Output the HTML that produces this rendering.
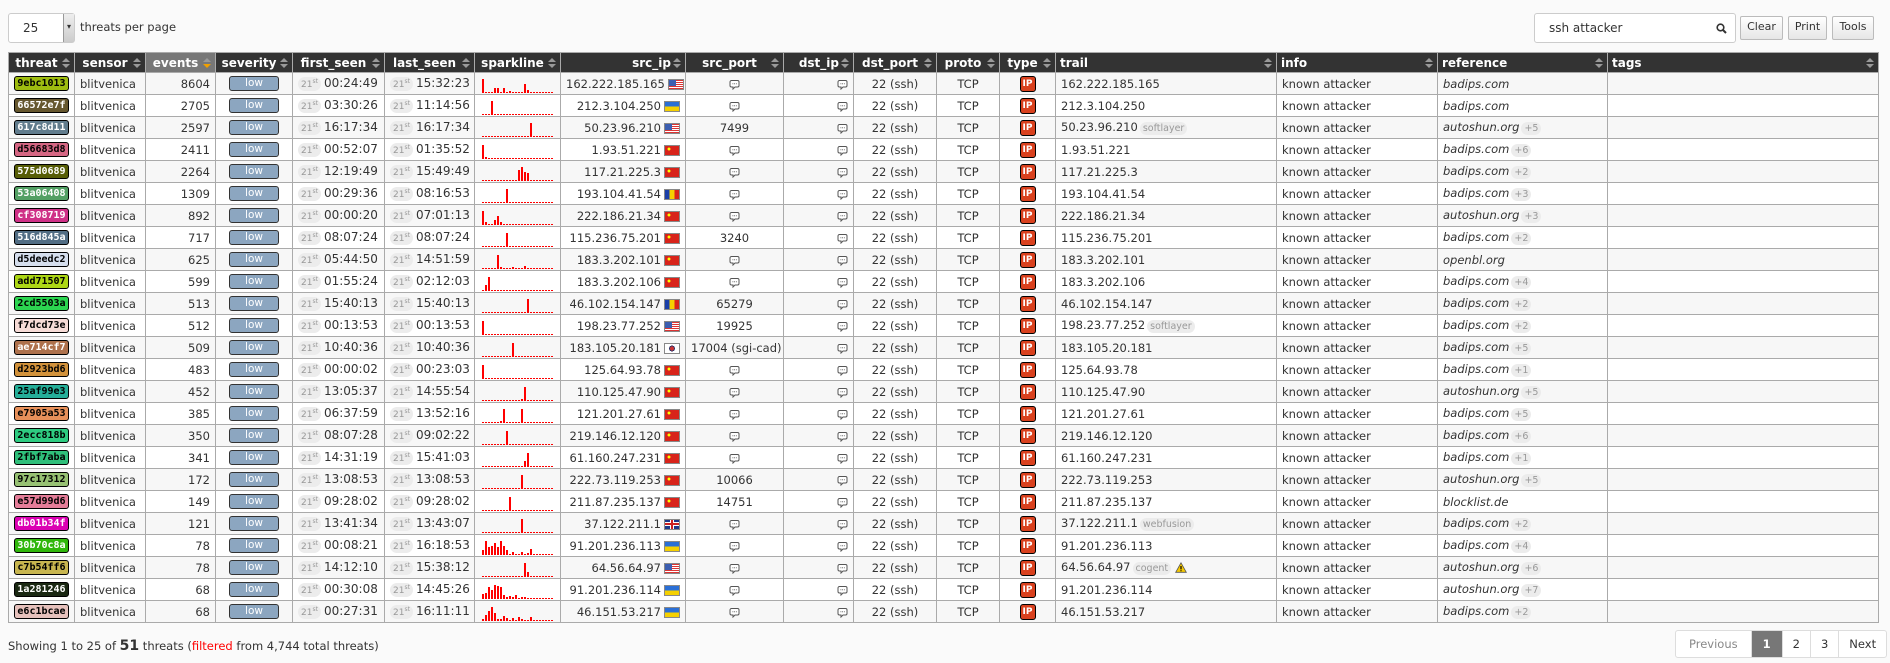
<!DOCTYPE html>
<html><head><meta charset="utf-8"><style>
*{box-sizing:border-box}
body{margin:0;background:#fafafa;font-family:"DejaVu Sans","Liberation Sans",sans-serif;font-size:11.5px;color:#333;width:1890px;height:663px;overflow:hidden;position:relative}
.sel{position:absolute;left:8px;top:13px;width:67px;height:30px;background:#fff;border:1px solid #ccc;border-radius:3px}
.sel span{position:absolute;left:14px;top:7px;font-size:12px}
.sel i{position:absolute;right:0;top:0;width:11px;height:28px;background:linear-gradient(#eee,#ccc);border-left:1px solid #999;font-style:normal;font-size:8px;text-align:center;line-height:26px}
.tpp{position:absolute;left:80px;top:20px;font-size:11.5px}
.search{position:absolute;left:1534px;top:13px;width:202px;height:30px;background:#fff;border:1px solid #ccc;border-radius:3px}
.search span{position:absolute;left:14px;top:7px;font-size:12px}
.btn{position:absolute;top:16px;height:24px;border:1px solid #bbb;background:linear-gradient(#fff,#e6e6e6);font-size:11px;text-align:center;line-height:20px;border-radius:2px}
table{position:absolute;left:8px;top:52px;border-collapse:collapse;table-layout:fixed;width:1870px}
th{background:#333;color:#fff;font-weight:bold;font-size:12px;height:20px;border:1px solid #aaa;padding:0 14px 0 4px;position:relative;white-space:nowrap}
th:after{content:"";position:absolute;right:4px;top:5px;width:0;height:0;border-left:4px solid transparent;border-right:4px solid transparent;border-bottom:4px solid #999}
th:before{content:"";position:absolute;right:4px;top:11px;width:0;height:0;border-left:4px solid transparent;border-right:4px solid transparent;border-top:4px solid #999}
th.ev{background:#777}th.ev:before{border-top-color:#f0a000}
td{height:22px;border:1px solid #aaa;padding:0 5px;white-space:nowrap;overflow:hidden}
tr:nth-child(even) td{background:#f7f7f7}
tr:nth-child(odd) td{background:#fff}
.c{text-align:center}.r{text-align:right}
.tb{display:inline-block;width:55px;height:15px;border:1px solid #000;border-radius:3px;font-weight:bold;font-size:10px;line-height:13px;text-align:center;font-family:"DejaVu Sans Mono","Liberation Mono",monospace;vertical-align:middle}
.w{color:#fff}.k{color:#000}
.low{display:inline-block;width:50px;height:15px;background:#8ca6c0;border:1px solid #333;border-radius:3px;color:#fff;font-size:10.5px;line-height:13px;text-align:center;vertical-align:middle}
.d{display:inline-block;background:#ececec;border-radius:7px;color:#999;font-size:9px;padding:1px 3px;margin-right:3px}
.d sup{font-size:6px}
.t{font-size:12px}
.f{display:inline-block;width:16px;height:11px;vertical-align:middle;margin-left:3px;border:1px solid #888}
.us{background:linear-gradient(#3c5eb0,#3c5eb0) 0 0/7px 6px no-repeat,repeating-linear-gradient(#d33 0 1px,#fff 1px 2px)}
.ua{background:linear-gradient(#2a6fd6 50%,#f5d000 50%)}
.cn{background:radial-gradient(circle at 4px 3px,#ff0 1.3px,transparent 1.6px),#d8231a}
.md{background:linear-gradient(90deg,#1a3fa8 33%,#f5d000 33% 67%,#d8231a 67%)}
.kr{background:radial-gradient(circle,#c33 0 2px,#336 2px 3px,#fff 3px)}
.gb{background:linear-gradient(#c22,#c22) center/16px 2px no-repeat,linear-gradient(#c22,#c22) center/2px 11px no-repeat,linear-gradient(#fff,#fff) center/16px 4px no-repeat,linear-gradient(#fff,#fff) center/4px 11px no-repeat,#1f3a8a}
.ip{display:inline-block;width:16px;height:16px;background:#d9411e;border:1px solid #000;border-radius:3px;color:#fff;font-weight:bold;font-size:9px;line-height:14px;text-align:center;vertical-align:middle}
.p{display:inline-block;background:#ececec;border-radius:7px;color:#999;font-size:9.5px;padding:1px 3px;margin-left:2px}
.ref{font-style:italic}
.cm{vertical-align:middle}
.sp{padding-left:7px}
.sp svg{display:block;margin-top:3px}
.foot{position:absolute;left:8px;top:638px;font-size:11.5px}
.foot b{font-size:14px}
.pg{position:absolute;left:1675px;top:630px;height:28px;border:1px solid #ddd;border-radius:3px;background:#fff;display:flex;font-size:11.5px}
.pg span{display:block;line-height:26px;padding:0 10px;border-left:1px solid #ddd}
</style></head><body>
<div class="sel"><span>25</span><i>▾</i></div>
<div class="tpp">threats per page</div>
<div class="search"><span>ssh attacker</span><svg style="position:absolute;right:8px;top:9px" width="11" height="11" viewBox="0 0 11 11"><circle cx="4.5" cy="4.5" r="3.3" fill="none" stroke="#333" stroke-width="1.6"/><path d="M7 7l3 3" stroke="#333" stroke-width="2"/></svg></div>
<div class="btn" style="left:1740px;width:43px">Clear</div>
<div class="btn" style="left:1788px;width:39px">Print</div>
<div class="btn" style="left:1832px;width:42px">Tools</div>
<svg width="0" height="0" style="position:absolute"><defs><symbol id="cm" viewBox="0 0 11 11"><path d="M2.5 1.5h6a1.5 1.5 0 0 1 1.5 1.5v3.5a1.5 1.5 0 0 1-1.5 1.5h-2.5l-2 2v-2h-1.5a1.5 1.5 0 0 1-1.5-1.5v-3.5a1.5 1.5 0 0 1 1.5-1.5z" fill="#fff" stroke="#555" stroke-width="1"/><path d="M3.5 4.8h.8M5.2 4.8h.8M6.9 4.8h.8" stroke="#555"/></symbol><symbol id="bl" viewBox="0 0 72 16"><line x1="0" y1="15.5" x2="72" y2="15.5" stroke="#f00" stroke-dasharray="2 1"/></symbol></defs></svg>
<table>
<colgroup><col style="width:66px"><col style="width:71px"><col style="width:70px"><col style="width:77px"><col style="width:92px"><col style="width:90px"><col style="width:86px"><col style="width:125px"><col style="width:98px"><col style="width:70px"><col style="width:83px"><col style="width:63px"><col style="width:56px"><col style="width:221px"><col style="width:161px"><col style="width:170px"><col style="width:271px"></colgroup>
<tr><th>threat</th><th>sensor</th><th class="ev">events</th><th>severity</th><th>first_seen</th><th>last_seen</th><th>sparkline</th><th style="text-align:right">src_ip</th><th>src_port</th><th style="text-align:right">dst_ip</th><th>dst_port</th><th>proto</th><th>type</th><th style="text-align:left">trail</th><th style="text-align:left">info</th><th style="text-align:left">reference</th><th style="text-align:left">tags</th></tr>

<tr><td class="c"><span class="tb k" style="background:#9ebc10">9ebc1013</span></td><td>blitvenica</td><td class="r">8604</td><td class="c"><span class="low">low</span></td><td><span class="d">21<sup>st</sup></span><span class="t">00:24:49</span></td><td><span class="d">21<sup>st</sup></span><span class="t">15:32:23</span></td><td class="sp"><svg width="72" height="16"><use href="#bl"/><path d="M1 16v-14M13 16v-5M16 16v-5M22 16v-5M28 16v-2M43 16v-9M46 16v-3" stroke="#f00" stroke-width="2"/></svg></td><td class="r">162.222.185.165<span class="f us"></span></td><td class="c"><svg class="cm" width="11" height="11"><use href="#cm"/></svg></td><td class="r"><svg class="cm" width="11" height="11"><use href="#cm"/></svg></td><td class="c">22 (ssh)</td><td class="c">TCP</td><td class="c"><span class="ip">IP</span></td><td>162.222.185.165</td><td>known attacker</td><td class="ref">badips.com</td><td></td></tr>

<tr><td class="c"><span class="tb w" style="background:#66572e">66572e7f</span></td><td>blitvenica</td><td class="r">2705</td><td class="c"><span class="low">low</span></td><td><span class="d">21<sup>st</sup></span><span class="t">03:30:26</span></td><td><span class="d">21<sup>st</sup></span><span class="t">11:14:56</span></td><td class="sp"><svg width="72" height="16"><use href="#bl"/><path d="M10 16v-14" stroke="#f00" stroke-width="2"/></svg></td><td class="r">212.3.104.250<span class="f ua"></span></td><td class="c"><svg class="cm" width="11" height="11"><use href="#cm"/></svg></td><td class="r"><svg class="cm" width="11" height="11"><use href="#cm"/></svg></td><td class="c">22 (ssh)</td><td class="c">TCP</td><td class="c"><span class="ip">IP</span></td><td>212.3.104.250</td><td>known attacker</td><td class="ref">badips.com</td><td></td></tr>

<tr><td class="c"><span class="tb w" style="background:#617c8d">617c8d11</span></td><td>blitvenica</td><td class="r">2597</td><td class="c"><span class="low">low</span></td><td><span class="d">21<sup>st</sup></span><span class="t">16:17:34</span></td><td><span class="d">21<sup>st</sup></span><span class="t">16:17:34</span></td><td class="sp"><svg width="72" height="16"><use href="#bl"/><path d="M49 16v-14" stroke="#f00" stroke-width="2"/></svg></td><td class="r">50.23.96.210<span class="f us"></span></td><td class="c">7499</td><td class="r"><svg class="cm" width="11" height="11"><use href="#cm"/></svg></td><td class="c">22 (ssh)</td><td class="c">TCP</td><td class="c"><span class="ip">IP</span></td><td>50.23.96.210<span class="p">softlayer</span></td><td>known attacker</td><td><span class="ref">autoshun.org</span><span class="p">+5</span></td><td></td></tr>

<tr><td class="c"><span class="tb k" style="background:#d56683">d56683d8</span></td><td>blitvenica</td><td class="r">2411</td><td class="c"><span class="low">low</span></td><td><span class="d">21<sup>st</sup></span><span class="t">00:52:07</span></td><td><span class="d">21<sup>st</sup></span><span class="t">01:35:52</span></td><td class="sp"><svg width="72" height="16"><use href="#bl"/><path d="M1 16v-14M4 16v-2" stroke="#f00" stroke-width="2"/></svg></td><td class="r">1.93.51.221<span class="f cn"></span></td><td class="c"><svg class="cm" width="11" height="11"><use href="#cm"/></svg></td><td class="r"><svg class="cm" width="11" height="11"><use href="#cm"/></svg></td><td class="c">22 (ssh)</td><td class="c">TCP</td><td class="c"><span class="ip">IP</span></td><td>1.93.51.221</td><td>known attacker</td><td><span class="ref">badips.com</span><span class="p">+6</span></td><td></td></tr>

<tr><td class="c"><span class="tb w" style="background:#575d06">575d0689</span></td><td>blitvenica</td><td class="r">2264</td><td class="c"><span class="low">low</span></td><td><span class="d">21<sup>st</sup></span><span class="t">12:19:49</span></td><td><span class="d">21<sup>st</sup></span><span class="t">15:49:49</span></td><td class="sp"><svg width="72" height="16"><use href="#bl"/><path d="M37 16v-11M40 16v-14M43 16v-9M46 16v-8" stroke="#f00" stroke-width="2"/></svg></td><td class="r">117.21.225.3<span class="f cn"></span></td><td class="c"><svg class="cm" width="11" height="11"><use href="#cm"/></svg></td><td class="r"><svg class="cm" width="11" height="11"><use href="#cm"/></svg></td><td class="c">22 (ssh)</td><td class="c">TCP</td><td class="c"><span class="ip">IP</span></td><td>117.21.225.3</td><td>known attacker</td><td><span class="ref">badips.com</span><span class="p">+2</span></td><td></td></tr>

<tr><td class="c"><span class="tb w" style="background:#53a064">53a06408</span></td><td>blitvenica</td><td class="r">1309</td><td class="c"><span class="low">low</span></td><td><span class="d">21<sup>st</sup></span><span class="t">00:29:36</span></td><td><span class="d">21<sup>st</sup></span><span class="t">08:16:53</span></td><td class="sp"><svg width="72" height="16"><use href="#bl"/><path d="M25 16v-14" stroke="#f00" stroke-width="2"/></svg></td><td class="r">193.104.41.54<span class="f md"></span></td><td class="c"><svg class="cm" width="11" height="11"><use href="#cm"/></svg></td><td class="r"><svg class="cm" width="11" height="11"><use href="#cm"/></svg></td><td class="c">22 (ssh)</td><td class="c">TCP</td><td class="c"><span class="ip">IP</span></td><td>193.104.41.54</td><td>known attacker</td><td><span class="ref">badips.com</span><span class="p">+3</span></td><td></td></tr>

<tr><td class="c"><span class="tb w" style="background:#cf3087">cf308719</span></td><td>blitvenica</td><td class="r">892</td><td class="c"><span class="low">low</span></td><td><span class="d">21<sup>st</sup></span><span class="t">00:00:20</span></td><td><span class="d">21<sup>st</sup></span><span class="t">07:01:13</span></td><td class="sp"><svg width="72" height="16"><use href="#bl"/><path d="M1 16v-14M4 16v-3M13 16v-5M16 16v-9M19 16v-3" stroke="#f00" stroke-width="2"/></svg></td><td class="r">222.186.21.34<span class="f cn"></span></td><td class="c"><svg class="cm" width="11" height="11"><use href="#cm"/></svg></td><td class="r"><svg class="cm" width="11" height="11"><use href="#cm"/></svg></td><td class="c">22 (ssh)</td><td class="c">TCP</td><td class="c"><span class="ip">IP</span></td><td>222.186.21.34</td><td>known attacker</td><td><span class="ref">autoshun.org</span><span class="p">+3</span></td><td></td></tr>

<tr><td class="c"><span class="tb w" style="background:#516d84">516d845a</span></td><td>blitvenica</td><td class="r">717</td><td class="c"><span class="low">low</span></td><td><span class="d">21<sup>st</sup></span><span class="t">08:07:24</span></td><td><span class="d">21<sup>st</sup></span><span class="t">08:07:24</span></td><td class="sp"><svg width="72" height="16"><use href="#bl"/><path d="M25 16v-14" stroke="#f00" stroke-width="2"/></svg></td><td class="r">115.236.75.201<span class="f cn"></span></td><td class="c">3240</td><td class="r"><svg class="cm" width="11" height="11"><use href="#cm"/></svg></td><td class="c">22 (ssh)</td><td class="c">TCP</td><td class="c"><span class="ip">IP</span></td><td>115.236.75.201</td><td>known attacker</td><td><span class="ref">badips.com</span><span class="p">+2</span></td><td></td></tr>

<tr><td class="c"><span class="tb k" style="background:#d5deed">d5deedc2</span></td><td>blitvenica</td><td class="r">625</td><td class="c"><span class="low">low</span></td><td><span class="d">21<sup>st</sup></span><span class="t">05:44:50</span></td><td><span class="d">21<sup>st</sup></span><span class="t">14:51:59</span></td><td class="sp"><svg width="72" height="16"><use href="#bl"/><path d="M16 16v-14M19 16v-2M31 16v-2M43 16v-3" stroke="#f00" stroke-width="2"/></svg></td><td class="r">183.3.202.101<span class="f cn"></span></td><td class="c"><svg class="cm" width="11" height="11"><use href="#cm"/></svg></td><td class="r"><svg class="cm" width="11" height="11"><use href="#cm"/></svg></td><td class="c">22 (ssh)</td><td class="c">TCP</td><td class="c"><span class="ip">IP</span></td><td>183.3.202.101</td><td>known attacker</td><td class="ref">openbl.org</td><td></td></tr>

<tr><td class="c"><span class="tb k" style="background:#add715">add71507</span></td><td>blitvenica</td><td class="r">599</td><td class="c"><span class="low">low</span></td><td><span class="d">21<sup>st</sup></span><span class="t">01:55:24</span></td><td><span class="d">21<sup>st</sup></span><span class="t">02:12:03</span></td><td class="sp"><svg width="72" height="16"><use href="#bl"/><path d="M4 16v-6M7 16v-14" stroke="#f00" stroke-width="2"/></svg></td><td class="r">183.3.202.106<span class="f cn"></span></td><td class="c"><svg class="cm" width="11" height="11"><use href="#cm"/></svg></td><td class="r"><svg class="cm" width="11" height="11"><use href="#cm"/></svg></td><td class="c">22 (ssh)</td><td class="c">TCP</td><td class="c"><span class="ip">IP</span></td><td>183.3.202.106</td><td>known attacker</td><td><span class="ref">badips.com</span><span class="p">+4</span></td><td></td></tr>

<tr><td class="c"><span class="tb k" style="background:#2cd550">2cd5503a</span></td><td>blitvenica</td><td class="r">513</td><td class="c"><span class="low">low</span></td><td><span class="d">21<sup>st</sup></span><span class="t">15:40:13</span></td><td><span class="d">21<sup>st</sup></span><span class="t">15:40:13</span></td><td class="sp"><svg width="72" height="16"><use href="#bl"/><path d="M46 16v-14" stroke="#f00" stroke-width="2"/></svg></td><td class="r">46.102.154.147<span class="f md"></span></td><td class="c">65279</td><td class="r"><svg class="cm" width="11" height="11"><use href="#cm"/></svg></td><td class="c">22 (ssh)</td><td class="c">TCP</td><td class="c"><span class="ip">IP</span></td><td>46.102.154.147</td><td>known attacker</td><td><span class="ref">badips.com</span><span class="p">+2</span></td><td></td></tr>

<tr><td class="c"><span class="tb k" style="background:#f7dcd7">f7dcd73e</span></td><td>blitvenica</td><td class="r">512</td><td class="c"><span class="low">low</span></td><td><span class="d">21<sup>st</sup></span><span class="t">00:13:53</span></td><td><span class="d">21<sup>st</sup></span><span class="t">00:13:53</span></td><td class="sp"><svg width="72" height="16"><use href="#bl"/><path d="M1 16v-14" stroke="#f00" stroke-width="2"/></svg></td><td class="r">198.23.77.252<span class="f us"></span></td><td class="c">19925</td><td class="r"><svg class="cm" width="11" height="11"><use href="#cm"/></svg></td><td class="c">22 (ssh)</td><td class="c">TCP</td><td class="c"><span class="ip">IP</span></td><td>198.23.77.252<span class="p">softlayer</span></td><td>known attacker</td><td><span class="ref">badips.com</span><span class="p">+2</span></td><td></td></tr>

<tr><td class="c"><span class="tb w" style="background:#ae714c">ae714cf7</span></td><td>blitvenica</td><td class="r">509</td><td class="c"><span class="low">low</span></td><td><span class="d">21<sup>st</sup></span><span class="t">10:40:36</span></td><td><span class="d">21<sup>st</sup></span><span class="t">10:40:36</span></td><td class="sp"><svg width="72" height="16"><use href="#bl"/><path d="M31 16v-14" stroke="#f00" stroke-width="2"/></svg></td><td class="r">183.105.20.181<span class="f kr"></span></td><td class="c">17004 (sgi-cad)</td><td class="r"><svg class="cm" width="11" height="11"><use href="#cm"/></svg></td><td class="c">22 (ssh)</td><td class="c">TCP</td><td class="c"><span class="ip">IP</span></td><td>183.105.20.181</td><td>known attacker</td><td><span class="ref">badips.com</span><span class="p">+5</span></td><td></td></tr>

<tr><td class="c"><span class="tb k" style="background:#d2923b">d2923bd6</span></td><td>blitvenica</td><td class="r">483</td><td class="c"><span class="low">low</span></td><td><span class="d">21<sup>st</sup></span><span class="t">00:00:02</span></td><td><span class="d">21<sup>st</sup></span><span class="t">00:23:03</span></td><td class="sp"><svg width="72" height="16"><use href="#bl"/><path d="M1 16v-14" stroke="#f00" stroke-width="2"/></svg></td><td class="r">125.64.93.78<span class="f cn"></span></td><td class="c"><svg class="cm" width="11" height="11"><use href="#cm"/></svg></td><td class="r"><svg class="cm" width="11" height="11"><use href="#cm"/></svg></td><td class="c">22 (ssh)</td><td class="c">TCP</td><td class="c"><span class="ip">IP</span></td><td>125.64.93.78</td><td>known attacker</td><td><span class="ref">badips.com</span><span class="p">+1</span></td><td></td></tr>

<tr><td class="c"><span class="tb k" style="background:#25af99">25af99e3</span></td><td>blitvenica</td><td class="r">452</td><td class="c"><span class="low">low</span></td><td><span class="d">21<sup>st</sup></span><span class="t">13:05:37</span></td><td><span class="d">21<sup>st</sup></span><span class="t">14:55:54</span></td><td class="sp"><svg width="72" height="16"><use href="#bl"/><path d="M40 16v-2M43 16v-14" stroke="#f00" stroke-width="2"/></svg></td><td class="r">110.125.47.90<span class="f cn"></span></td><td class="c"><svg class="cm" width="11" height="11"><use href="#cm"/></svg></td><td class="r"><svg class="cm" width="11" height="11"><use href="#cm"/></svg></td><td class="c">22 (ssh)</td><td class="c">TCP</td><td class="c"><span class="ip">IP</span></td><td>110.125.47.90</td><td>known attacker</td><td><span class="ref">autoshun.org</span><span class="p">+5</span></td><td></td></tr>

<tr><td class="c"><span class="tb k" style="background:#e7905a">e7905a53</span></td><td>blitvenica</td><td class="r">385</td><td class="c"><span class="low">low</span></td><td><span class="d">21<sup>st</sup></span><span class="t">06:37:59</span></td><td><span class="d">21<sup>st</sup></span><span class="t">13:52:16</span></td><td class="sp"><svg width="72" height="16"><use href="#bl"/><path d="M19 16v-2M22 16v-14M40 16v-14" stroke="#f00" stroke-width="2"/></svg></td><td class="r">121.201.27.61<span class="f cn"></span></td><td class="c"><svg class="cm" width="11" height="11"><use href="#cm"/></svg></td><td class="r"><svg class="cm" width="11" height="11"><use href="#cm"/></svg></td><td class="c">22 (ssh)</td><td class="c">TCP</td><td class="c"><span class="ip">IP</span></td><td>121.201.27.61</td><td>known attacker</td><td><span class="ref">badips.com</span><span class="p">+5</span></td><td></td></tr>

<tr><td class="c"><span class="tb k" style="background:#2ecc81">2ecc818b</span></td><td>blitvenica</td><td class="r">350</td><td class="c"><span class="low">low</span></td><td><span class="d">21<sup>st</sup></span><span class="t">08:07:28</span></td><td><span class="d">21<sup>st</sup></span><span class="t">09:02:22</span></td><td class="sp"><svg width="72" height="16"><use href="#bl"/><path d="M25 16v-14" stroke="#f00" stroke-width="2"/></svg></td><td class="r">219.146.12.120<span class="f cn"></span></td><td class="c"><svg class="cm" width="11" height="11"><use href="#cm"/></svg></td><td class="r"><svg class="cm" width="11" height="11"><use href="#cm"/></svg></td><td class="c">22 (ssh)</td><td class="c">TCP</td><td class="c"><span class="ip">IP</span></td><td>219.146.12.120</td><td>known attacker</td><td><span class="ref">badips.com</span><span class="p">+6</span></td><td></td></tr>

<tr><td class="c"><span class="tb k" style="background:#2fbf7a">2fbf7aba</span></td><td>blitvenica</td><td class="r">341</td><td class="c"><span class="low">low</span></td><td><span class="d">21<sup>st</sup></span><span class="t">14:31:19</span></td><td><span class="d">21<sup>st</sup></span><span class="t">15:41:03</span></td><td class="sp"><svg width="72" height="16"><use href="#bl"/><path d="M43 16v-6M46 16v-14" stroke="#f00" stroke-width="2"/></svg></td><td class="r">61.160.247.231<span class="f cn"></span></td><td class="c"><svg class="cm" width="11" height="11"><use href="#cm"/></svg></td><td class="r"><svg class="cm" width="11" height="11"><use href="#cm"/></svg></td><td class="c">22 (ssh)</td><td class="c">TCP</td><td class="c"><span class="ip">IP</span></td><td>61.160.247.231</td><td>known attacker</td><td><span class="ref">badips.com</span><span class="p">+1</span></td><td></td></tr>

<tr><td class="c"><span class="tb k" style="background:#97c173">97c17312</span></td><td>blitvenica</td><td class="r">172</td><td class="c"><span class="low">low</span></td><td><span class="d">21<sup>st</sup></span><span class="t">13:08:53</span></td><td><span class="d">21<sup>st</sup></span><span class="t">13:08:53</span></td><td class="sp"><svg width="72" height="16"><use href="#bl"/><path d="M40 16v-14" stroke="#f00" stroke-width="2"/></svg></td><td class="r">222.73.119.253<span class="f cn"></span></td><td class="c">10066</td><td class="r"><svg class="cm" width="11" height="11"><use href="#cm"/></svg></td><td class="c">22 (ssh)</td><td class="c">TCP</td><td class="c"><span class="ip">IP</span></td><td>222.73.119.253</td><td>known attacker</td><td><span class="ref">autoshun.org</span><span class="p">+5</span></td><td></td></tr>

<tr><td class="c"><span class="tb k" style="background:#e57d99">e57d99d6</span></td><td>blitvenica</td><td class="r">149</td><td class="c"><span class="low">low</span></td><td><span class="d">21<sup>st</sup></span><span class="t">09:28:02</span></td><td><span class="d">21<sup>st</sup></span><span class="t">09:28:02</span></td><td class="sp"><svg width="72" height="16"><use href="#bl"/><path d="M28 16v-14" stroke="#f00" stroke-width="2"/></svg></td><td class="r">211.87.235.137<span class="f cn"></span></td><td class="c">14751</td><td class="r"><svg class="cm" width="11" height="11"><use href="#cm"/></svg></td><td class="c">22 (ssh)</td><td class="c">TCP</td><td class="c"><span class="ip">IP</span></td><td>211.87.235.137</td><td>known attacker</td><td class="ref">blocklist.de</td><td></td></tr>

<tr><td class="c"><span class="tb w" style="background:#db01b3">db01b34f</span></td><td>blitvenica</td><td class="r">121</td><td class="c"><span class="low">low</span></td><td><span class="d">21<sup>st</sup></span><span class="t">13:41:34</span></td><td><span class="d">21<sup>st</sup></span><span class="t">13:43:07</span></td><td class="sp"><svg width="72" height="16"><use href="#bl"/><path d="M40 16v-14" stroke="#f00" stroke-width="2"/></svg></td><td class="r">37.122.211.1<span class="f gb"></span></td><td class="c"><svg class="cm" width="11" height="11"><use href="#cm"/></svg></td><td class="r"><svg class="cm" width="11" height="11"><use href="#cm"/></svg></td><td class="c">22 (ssh)</td><td class="c">TCP</td><td class="c"><span class="ip">IP</span></td><td>37.122.211.1<span class="p">webfusion</span></td><td>known attacker</td><td><span class="ref">badips.com</span><span class="p">+2</span></td><td></td></tr>

<tr><td class="c"><span class="tb w" style="background:#30b70c">30b70c8a</span></td><td>blitvenica</td><td class="r">78</td><td class="c"><span class="low">low</span></td><td><span class="d">21<sup>st</sup></span><span class="t">00:08:21</span></td><td><span class="d">21<sup>st</sup></span><span class="t">16:18:53</span></td><td class="sp"><svg width="72" height="16"><use href="#bl"/><path d="M1 16v-5M4 16v-14M7 16v-8M10 16v-9M13 16v-12M16 16v-8M19 16v-14M22 16v-9M25 16v-5M28 16v-1M31 16v-3M34 16v-1M37 16v-1M40 16v-3M43 16v-1M46 16v-2M49 16v-6" stroke="#f00" stroke-width="2"/></svg></td><td class="r">91.201.236.113<span class="f ua"></span></td><td class="c"><svg class="cm" width="11" height="11"><use href="#cm"/></svg></td><td class="r"><svg class="cm" width="11" height="11"><use href="#cm"/></svg></td><td class="c">22 (ssh)</td><td class="c">TCP</td><td class="c"><span class="ip">IP</span></td><td>91.201.236.113</td><td>known attacker</td><td><span class="ref">badips.com</span><span class="p">+4</span></td><td></td></tr>

<tr><td class="c"><span class="tb k" style="background:#c7b54f">c7b54ff6</span></td><td>blitvenica</td><td class="r">78</td><td class="c"><span class="low">low</span></td><td><span class="d">21<sup>st</sup></span><span class="t">14:12:10</span></td><td><span class="d">21<sup>st</sup></span><span class="t">15:38:12</span></td><td class="sp"><svg width="72" height="16"><use href="#bl"/><path d="M43 16v-14M46 16v-5" stroke="#f00" stroke-width="2"/></svg></td><td class="r">64.56.64.97<span class="f us"></span></td><td class="c"><svg class="cm" width="11" height="11"><use href="#cm"/></svg></td><td class="r"><svg class="cm" width="11" height="11"><use href="#cm"/></svg></td><td class="c">22 (ssh)</td><td class="c">TCP</td><td class="c"><span class="ip">IP</span></td><td>64.56.64.97<span class="p">cogent</span> <svg class="cm" width="12" height="11" viewBox="0 0 12 11"><path d="M6 .8L11.3 10.3H.7z" fill="#f5c800" stroke="#555" stroke-width=".8"/><path d="M6 4v3.4M6 8.3v1" stroke="#000" stroke-width="1.2"/></svg></td><td>known attacker</td><td><span class="ref">autoshun.org</span><span class="p">+6</span></td><td></td></tr>

<tr><td class="c"><span class="tb w" style="background:#1a2812">1a281246</span></td><td>blitvenica</td><td class="r">68</td><td class="c"><span class="low">low</span></td><td><span class="d">21<sup>st</sup></span><span class="t">00:30:08</span></td><td><span class="d">21<sup>st</sup></span><span class="t">14:45:26</span></td><td class="sp"><svg width="72" height="16"><use href="#bl"/><path d="M1 16v-5M4 16v-6M7 16v-12M10 16v-9M13 16v-14M16 16v-13M19 16v-12M22 16v-4M25 16v-2M28 16v-3M31 16v-2M34 16v-4M37 16v-1M40 16v-2M43 16v-2" stroke="#f00" stroke-width="2"/></svg></td><td class="r">91.201.236.114<span class="f ua"></span></td><td class="c"><svg class="cm" width="11" height="11"><use href="#cm"/></svg></td><td class="r"><svg class="cm" width="11" height="11"><use href="#cm"/></svg></td><td class="c">22 (ssh)</td><td class="c">TCP</td><td class="c"><span class="ip">IP</span></td><td>91.201.236.114</td><td>known attacker</td><td><span class="ref">autoshun.org</span><span class="p">+7</span></td><td></td></tr>

<tr><td class="c"><span class="tb k" style="background:#e6c1bc">e6c1bcae</span></td><td>blitvenica</td><td class="r">68</td><td class="c"><span class="low">low</span></td><td><span class="d">21<sup>st</sup></span><span class="t">00:27:31</span></td><td><span class="d">21<sup>st</sup></span><span class="t">16:11:11</span></td><td class="sp"><svg width="72" height="16"><use href="#bl"/><path d="M1 16v-2M4 16v-6M7 16v-10M10 16v-14M13 16v-8M16 16v-2M19 16v-2M22 16v-5M25 16v-3M28 16v-1M31 16v-3M34 16v-1M37 16v-4M40 16v-2M43 16v-1M46 16v-1M49 16v-4" stroke="#f00" stroke-width="2"/></svg></td><td class="r">46.151.53.217<span class="f ua"></span></td><td class="c"><svg class="cm" width="11" height="11"><use href="#cm"/></svg></td><td class="r"><svg class="cm" width="11" height="11"><use href="#cm"/></svg></td><td class="c">22 (ssh)</td><td class="c">TCP</td><td class="c"><span class="ip">IP</span></td><td>46.151.53.217</td><td>known attacker</td><td><span class="ref">badips.com</span><span class="p">+2</span></td><td></td></tr>
</table>
<div class="foot">Showing 1 to 25 of <b>51</b> threats (<span style="color:#f00">filtered</span> from 4,744 total threats)</div>
<div class="pg"><span style="border-left:0;color:#888;padding:0 13px">Previous</span><span style="background:#777;color:#fff;font-weight:bold;padding:0 11px">1</span><span>2</span><span>3</span><span>Next</span></div>
</body></html>
